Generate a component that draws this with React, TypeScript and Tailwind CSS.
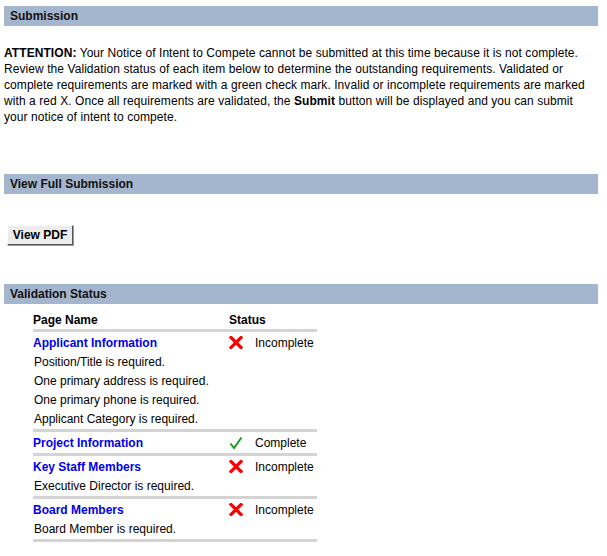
import React from "react";

const XIcon = () => (
  <svg width="14" height="13" viewBox="0 0 14 13" className="block">
    <path d="M2 1.5 L12 11.5 M12 1.5 L2 11.5" stroke="#ff0000" strokeWidth="3.2" strokeLinecap="square" fill="none" />
  </svg>
);

const CheckIcon = () => (
  <svg width="14" height="14" viewBox="0 0 14 14" className="block">
    <path d="M1.5 7.5 L5 12 L12.5 1.5" stroke="#1f9a1f" strokeWidth="2" fill="none" />
  </svg>
);

type Row = { name: string; ok: boolean; notes: string[] };

const rows: Row[] = [
  {
    name: "Applicant Information",
    ok: false,
    notes: [
      "Position/Title is required.",
      "One primary address is required.",
      "One primary phone is required.",
      "Applicant Category is required.",
    ],
  },
  { name: "Project Information", ok: true, notes: [] },
  { name: "Key Staff Members", ok: false, notes: ["Executive Director is required."] },
  { name: "Board Members", ok: false, notes: ["Board Member is required."] },
];

const Bar = ({ children }: { children: React.ReactNode }) => (
  <div className="ml-[4px] w-[594px] h-[20px] bg-[#a4b5ce] pl-[6px] text-[12px] font-bold leading-[20px] text-[#111]">
    {children}
  </div>
);

export default function App() {
  return (
    <div
      className="w-[607px] h-[556px] bg-white text-[12px] text-black"
      style={{ fontFamily: '"Liberation Sans", Arial, sans-serif' }}
    >
      <div className="pt-[6px]">
        <Bar>Submission</Bar>
      </div>
      <p className="ml-[4px] w-[594px] mt-[19px] leading-[16px] text-[12px] tracking-[0.07px]">
        <b>ATTENTION:</b> Your Notice of Intent to Compete cannot be submitted at this time because it is not complete.
        Review the Validation status of each item below to determine the outstanding requirements. Validated or
        complete requirements are marked with a green check mark. Invalid or incomplete requirements are marked
        with a red X. Once all requirements are validated, the <b>Submit</b> button will be displayed and you can submit
        your notice of intent to compete.
      </p>
      <div className="mt-[49px]">
        <Bar>View Full Submission</Bar>
      </div>
      <div className="mt-[31px] ml-[7px]">
        <button className="h-[20px] w-[66px] border border-t-[#ffffff] border-l-[#ffffff] border-r-[#555] border-b-[#555] bg-[#ececec] text-[12px] font-bold leading-[18px] text-black shadow-[1px_1px_0_#999]">
          View PDF
        </button>
      </div>
      <div className="mt-[39px]">
        <Bar>Validation Status</Bar>
      </div>
      <div className="ml-[33px] mt-[6px] w-[284px]">
        <div className="flex h-[22px] items-center border-b-[3px] border-[#d3d3d3] font-bold leading-[18px]">
          <div className="w-[196px]">Page Name</div>
          <div>Status</div>
        </div>
        {rows.map((r) => (
          <div key={r.name} className="border-b-[3px] border-[#d3d3d3]">
            <div className="flex h-[21px] items-center">
              <div className="w-[196px] font-bold text-[#0000ee]">{r.name}</div>
              <div className="flex w-[26px] items-center">{r.ok ? <CheckIcon /> : <XIcon />}</div>
              <div>{r.ok ? "Complete" : "Incomplete"}</div>
            </div>
            {r.notes.map((n) => (
              <div key={n} className="h-[19px] leading-[19px] pl-[1px]">
                {n}
              </div>
            ))}
          </div>
        ))}
      </div>
    </div>
  );
}
